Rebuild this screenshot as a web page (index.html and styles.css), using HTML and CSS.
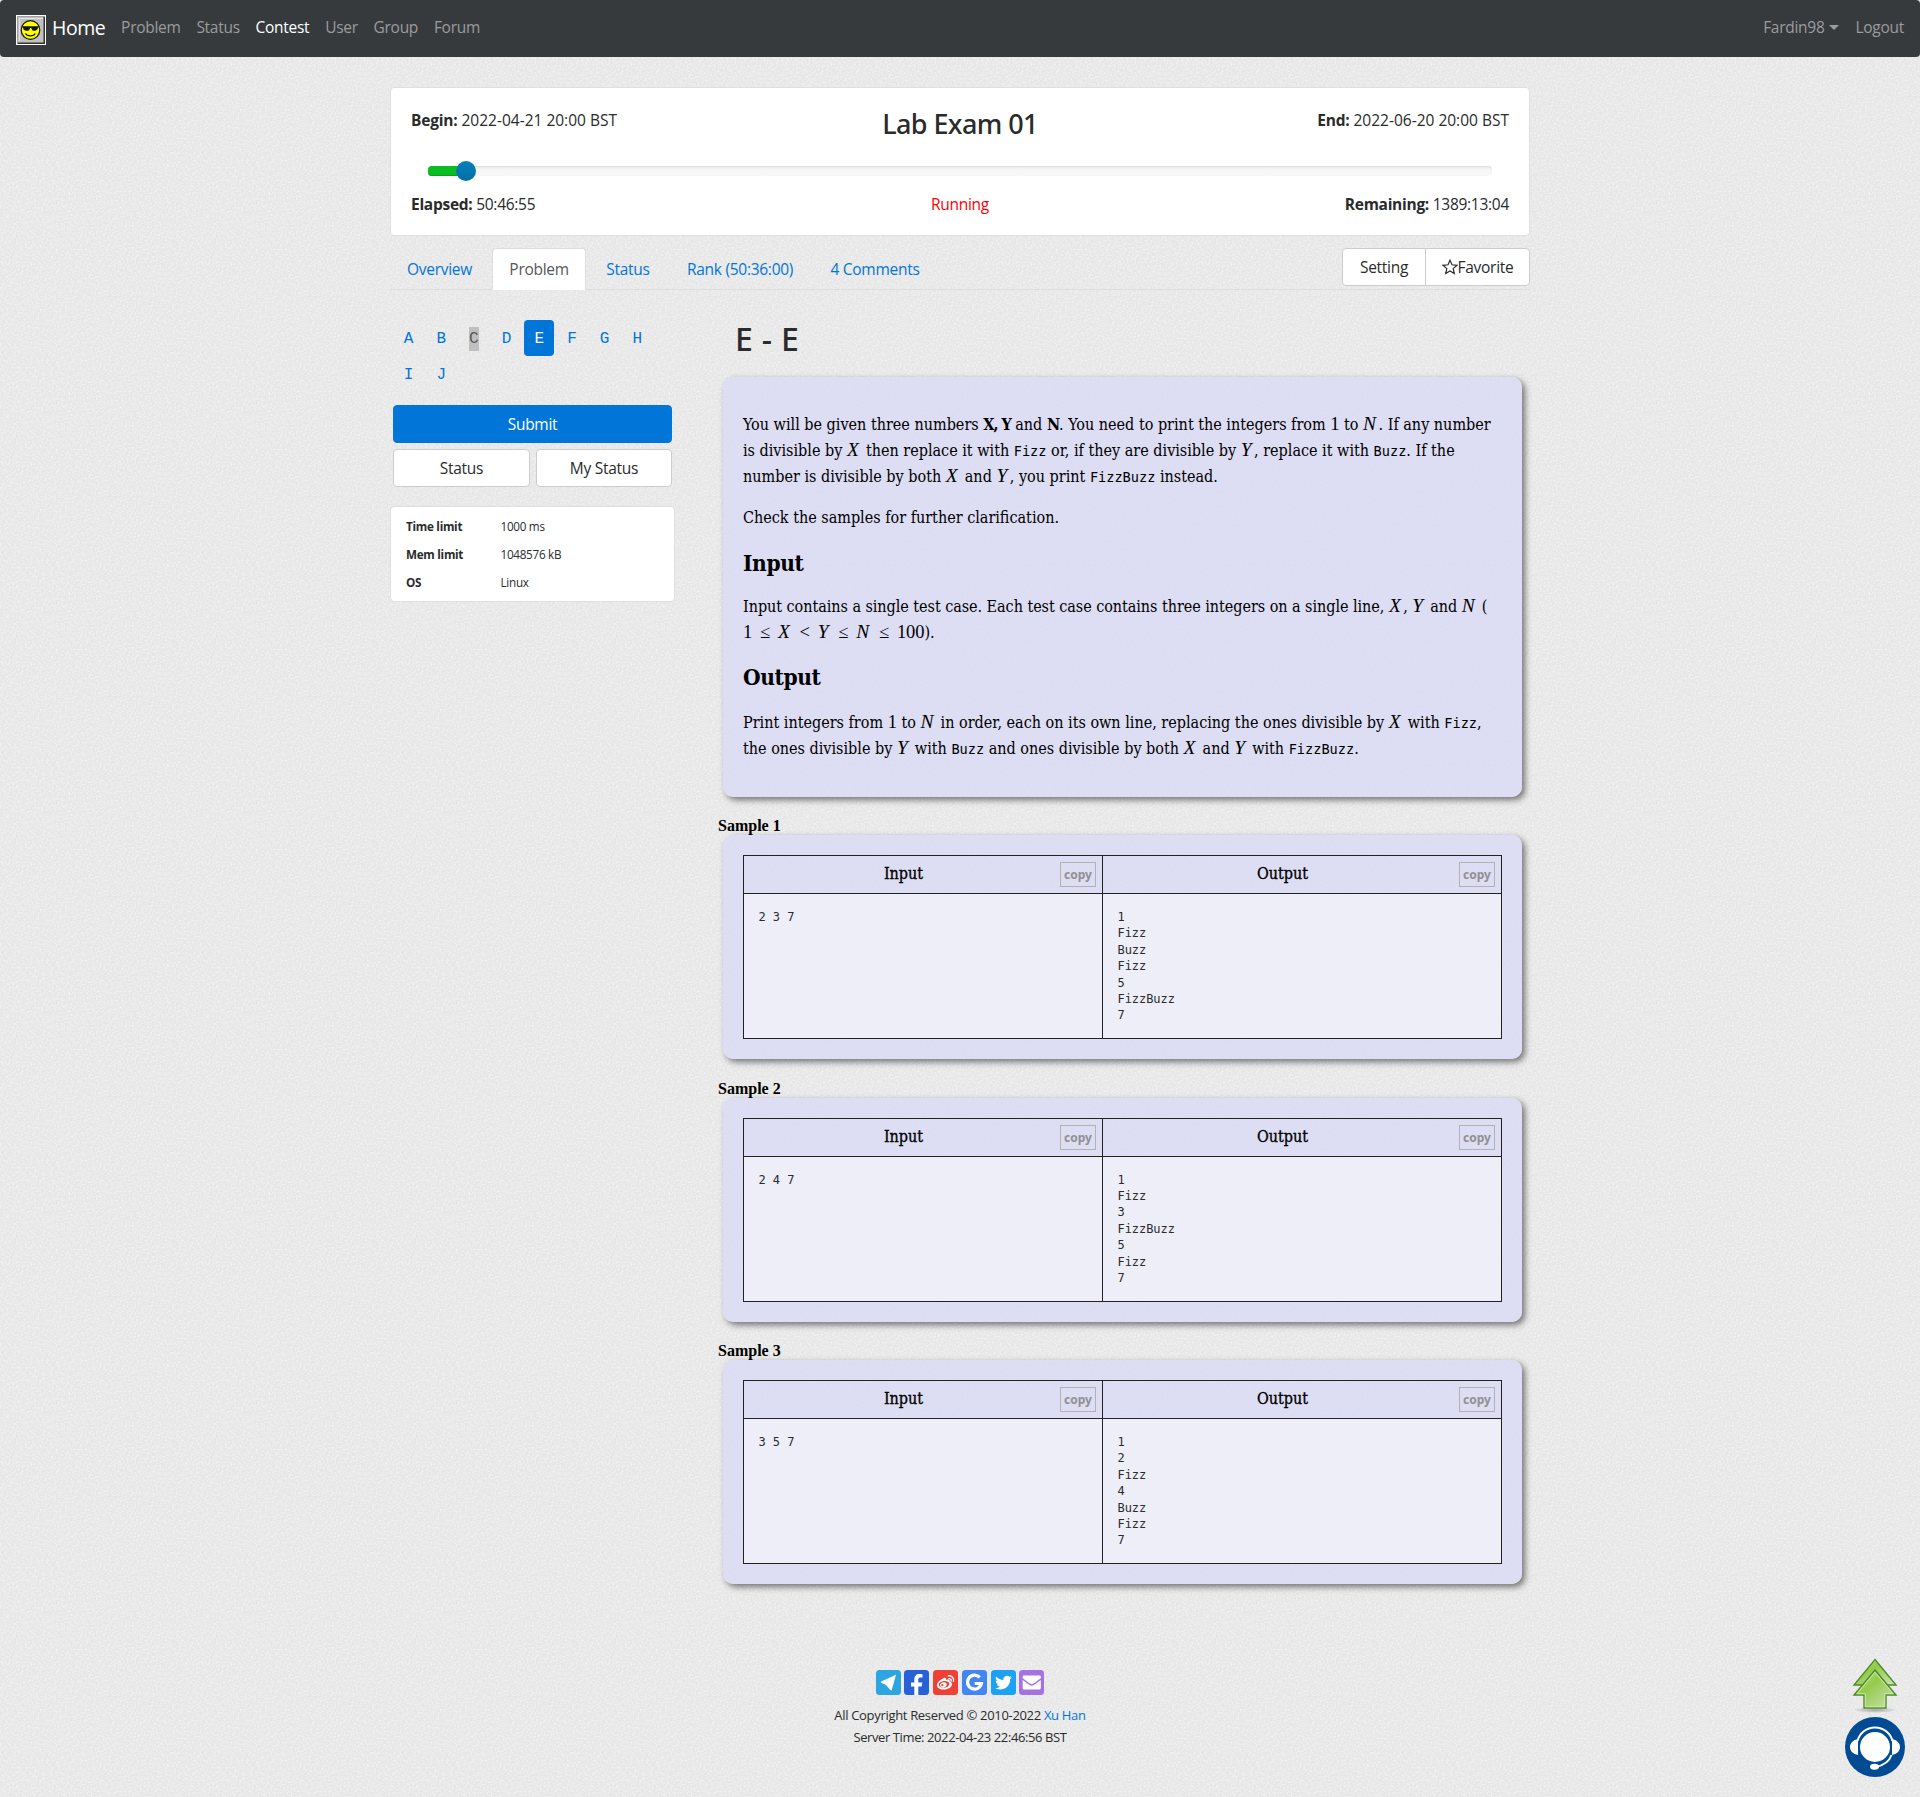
FILE: index.html
```html
<!DOCTYPE html>
<html lang="en">
<head>
<meta charset="utf-8">
<title>Lab Exam 01 - Problem E</title>
<link rel="stylesheet" href="styles.css">
</head>
<body>
<nav class="navbar">
  <a class="brand">
    <svg class="brand-icon" width="30" height="30" viewBox="0 0 30 30">
      <path fill="#fff" d="M0 0h30v30H0z"/><path fill="#c0c0c0" d="M1 1h28v28H1z"/>
      <path fill="#a0a0a0" d="M1 1h28v1H2v27H1z"/><path fill="#e4e4e4" d="M3 3h24v1H4v22H3z"/>
      <path fill="#333" d="M27.500 2v25.500H2V29h27V2z"/>
      <circle cx="14.500" cy="15" r="9.300" fill="#ff0" stroke="#111" stroke-width="1.200"/>
      <path fill="#111" d="M6 11.200h17v1.400h-1c-.4 2.200-1.600 3.200-3.400 3.200s-2.900-1-3.300-2.900h-1.200C13.700 14.800 12.400 15.800 10.600 15.800c-2 0-3.300-.9-3.700-3.200H6z"/>
      <path fill="none" stroke="#111" stroke-width="1.200" d="M9.500 18.500c1.600 3.200 8.200 3.200 9.800 0"/>
    </svg>
    <span>Home</span>
  </a>
  <a>Problem</a><a>Status</a><a class="current">Contest</a><a>User</a><a>Group</a><a>Forum</a>
  <span class="nav-right"><a>Fardin98<i class="caret"></i></a><a>Logout</a></span>
</nav>

<main class="container">
  <section class="card contest">
    <div class="contest-row">
      <span class="date"><b>Begin:</b> 2022-04-21 20:00 BST</span>
      <h3>Lab Exam 01</h3>
      <span class="date end"><b>End:</b> 2022-06-20 20:00 BST</span>
    </div>
    <div class="track"><div class="fill"></div><div class="knob"></div></div>
    <div class="contest-row">
      <span><b>Elapsed:</b> 50:46:55</span>
      <span class="running">Running</span>
      <span class="end"><b>Remaining:</b> 1389:13:04</span>
    </div>
  </section>

  <div class="tabs">
    <a>Overview</a><a class="active">Problem</a><a>Status</a><a>Rank (50:36:00)</a><a>4 Comments</a>
    <div class="group">
      <button>Setting</button><button><svg class="star" width="16" height="16" viewBox="0 0 16 16"><path d="M8 1.200l2 4.600 5 .5-3.800 3.300 1.100 4.900L8 11.900l-4.300 2.600 1.100-4.900L1 6.300l5-.5z" fill="none" stroke="#292b2c" stroke-width="1.200"/></svg>Favorite</button>
    </div>
  </div>

  <div class="columns">
    <aside>
      <div class="letters">
        <a>A</a><a>B</a><a><span class="picked">C</span></a><a>D</a><a class="on">E</a><a>F</a><a>G</a><a>H</a><a>I</a><a>J</a>
      </div>
      <div class="actions">
        <button class="primary">Submit</button><button>Status</button><button>My Status</button>
      </div>
      <dl class="card limits">
        <dt>Time limit</dt><dd>1000 ms</dd>
        <dt>Mem limit</dt><dd>1048576 kB</dd>
        <dt>OS</dt><dd>Linux</dd>
      </dl>
    </aside>

    <article>
      <h2>E - E</h2>
      <section class="panel statement">
        <p>You will be given three numbers <b>X, Y</b> and <b>N</b>. You need to print the integers from <var class="num">1</var> to <var>N</var>. If any number<br>
          is divisible by <var>X</var> then replace it with <code>Fizz</code> or, if they are divisible by <var>Y</var>, replace it with <code>Buzz</code>. If the<br>
          number is divisible by both <var>X</var> and <var>Y</var>, you print <code>FizzBuzz</code> instead.</p>
        <p>Check the samples for further clarification.</p>
        <h4>Input</h4>
        <p class="tight">Input contains a single test case. Each test case contains three integers on a single line, <var>X</var>, <var>Y</var> and <var>N</var> (<br>
          <span class="formula">1 ≤ <i>X</i> &lt; <i>Y</i> ≤ <i>N</i> ≤ 100</span>).</p>
        <h4>Output</h4>
        <p>Print integers from <var class="num">1</var> to <var>N</var> in order, each on its own line, replacing the ones divisible by <var>X</var> with <code>Fizz</code>,<br>
          the ones divisible by <var>Y</var> with <code>Buzz</code> and ones divisible by both <var>X</var> and <var>Y</var> with <code>FizzBuzz</code>.</p>
      </section>

      <div class="sample">
        <h5>Sample 1</h5>
        <div class="panel io">
          <div class="io-head">Input<button class="copy">copy</button></div>
          <div class="io-head">Output<button class="copy">copy</button></div>
          <pre>2 3 7</pre>
          <pre>1
Fizz
Buzz
Fizz
5
FizzBuzz
7</pre>
        </div>
      </div>
      <div class="sample">
        <h5>Sample 2</h5>
        <div class="panel io">
          <div class="io-head">Input<button class="copy">copy</button></div>
          <div class="io-head">Output<button class="copy">copy</button></div>
          <pre>2 4 7</pre>
          <pre>1
Fizz
3
FizzBuzz
5
Fizz
7</pre>
        </div>
      </div>
      <div class="sample">
        <h5>Sample 3</h5>
        <div class="panel io">
          <div class="io-head">Input<button class="copy">copy</button></div>
          <div class="io-head">Output<button class="copy">copy</button></div>
          <pre>3 5 7</pre>
          <pre>1
2
Fizz
4
Buzz
Fizz
7</pre>
        </div>
      </div>
    </article>
  </div>
</main>

<footer>
  <div class="social">
    <svg viewBox="0 0 25 25"><rect width="25" height="25" rx="3.500" fill="#2ca5e0"/><path fill="#fff" d="M20 4.800L5.200 11.600c-.6.400-.4.900.2 1.200l4.200 2 4.800 5.300c.6.600 1.200.4 1.400-.3z"/></svg>
    <svg viewBox="0 0 25 25"><rect width="25" height="25" rx="3.500" fill="#2860d8"/><path fill="#fff" d="M10.300 25v-8.600H7V12.500h3.300V9.700c0-3.700 2-5.700 5.200-5.700 1.200 0 2.300.1 3 .2v3.400h-2c-1.700 0-2.200.9-2.200 2.100v2.800h4l-.6 3.900h-3.400V25z"/></svg>
    <svg viewBox="0 0 25 25"><rect width="25" height="25" rx="3.500" fill="#ef4035"/><path fill="#fff" fill-rule="evenodd" d="M10.500 8.200c1.700-.9 2.900-.2 2.500 1.700 2-.8 4-.7 3.700 1.500 1.800.6 2.800 1.700 2.300 3.400-.9 3.300-5 5-8.700 4.800-3.600-.2-6.500-2-6.400-4.700.1-2.500 3.900-5.600 6.600-6.700zM11 11c-3.300.3-5.400 2.100-5.200 3.900s2.400 3 5.400 2.800 5.300-2.100 5.100-4-2.400-3-5.300-2.700zM9.800 12.400c2-.5 4 .4 4 2.200 0 1.700-2 3.100-4 2.900-1.900-.2-3-1.400-2.700-2.900.3-1.200 1.400-2 2.700-2.200zM9.400 14a1.100 1.100 0 1 0 .1 2.200 1.100 1.100 0 0 0-.1-2.200z"/><path fill="none" stroke="#fff" stroke-width="1.400" stroke-linecap="round" d="M15.400 5.800c3.400-.5 6 2.300 5 5.600M15.900 8.600c1.600-.1 2.600 1 2.200 2.400"/></svg>
    <svg viewBox="0 0 25 25"><rect width="25" height="25" rx="3.500" fill="#4285f4"/><path fill="none" stroke="#fff" stroke-width="3.200" d="M17.700 7.400a7 7 0 1 0 1.700 6.100h-6.700"/></svg>
    <svg viewBox="0 0 25 25"><rect width="25" height="25" rx="3.500" fill="#1da1f2"/><path fill="#fff" d="M21 7.300c-.6.300-1.300.5-2 .6.700-.4 1.200-1.100 1.500-1.900-.7.400-1.400.7-2.200.8a3.500 3.500 0 0 0-5.900 3.200C9.500 9.900 7 8.500 5.200 6.400c-1 1.700-.4 3.700 1.100 4.700-.6 0-1.100-.2-1.600-.4 0 1.700 1.200 3.100 2.800 3.500-.5.100-1 .1-1.600 0 .4 1.400 1.700 2.400 3.200 2.400A7 7 0 0 1 4 18.100c5.900 3.600 15.300.5 15.200-9 .7-.5 1.300-1.100 1.800-1.800z"/></svg>
    <svg viewBox="0 0 25 25"><rect width="25" height="25" rx="3.500" fill="#a572e6"/><path fill="#fff" d="M5 5.500h15.500c.8 0 1.300.5 1.300 1.200v1.500c-2.800 2.200-5.500 4.300-7.400 5.400-1.200.7-2 .7-3.200 0C9.300 12.500 6.500 10.400 3.700 8.200V6.700c0-.7.500-1.200 1.300-1.200zM3.700 10c3 2.300 5.200 4 6.800 5 1.600 1 2.900 1 4.500 0 1.600-1 3.800-2.700 6.800-5v8c0 .9-.6 1.500-1.400 1.500H5.100c-.8 0-1.400-.6-1.400-1.500z"/></svg>
  </div>
  <p>All Copyright Reserved © 2010-2022 <a>Xu Han</a></p>
  <p class="clock">Server Time: 2022-04-23 22:46:56 BST</p>
</footer>

<div class="floating">
  <svg width="46" height="56" viewBox="0 0 46 56">
    <defs>
      <linearGradient id="leaf" x1="0" y1="0" x2="1" y2="1"><stop offset="0" stop-color="#c4e0a0"/><stop offset=".4" stop-color="#93cb48"/><stop offset=".6" stop-color="#a8d272"/><stop offset="1" stop-color="#cbe5b0"/></linearGradient>
      <radialGradient id="shade"><stop offset="0" stop-color="#000" stop-opacity=".3"/><stop offset="1" stop-color="#000" stop-opacity="0"/></radialGradient>
    </defs>
    <ellipse cx="23" cy="52" rx="22" ry="3" fill="url(#shade)"/>
    <path d="M23 1.500L44 27H2z" fill="url(#leaf)" stroke="#4e8a2c" stroke-width="1.400"/>
    <path d="M23 12L44 37H34v13H12V37H2z" fill="url(#leaf)" stroke="#4e8a2c" stroke-width="1.400"/>
    <path d="M23 14.200L41 35.700h-8.300v13H13.300v-13H5z" fill="none" stroke="#cbe8a6" stroke-width="1"/>
  </svg>
  <svg width="60" height="60" viewBox="0 0 60 60">
    <circle cx="30" cy="30" r="30" fill="#004b93"/>
    <circle cx="30" cy="30" r="15" fill="#fff"/>
    <path fill="#fff" d="M13 22v16C8 37 5 34 5 30s3-7 8-8zM47 22v16c5-1 8-4 8-8s-3-7-8-8z"/>
    <path fill="none" stroke="#fff" stroke-width="2" d="M12.500 24c2-8 9-13.500 17.500-13.500S45.500 16 47.500 24M46.500 38c-2 6-8 10.500-16 12"/>
    <ellipse cx="29.500" cy="49.700" rx="4.500" ry="3" fill="#fff"/>
  </svg>
</div>
</body>
</html>
```
FILE: styles.css
```css
* { box-sizing: border-box; }
body {
  margin: 0;
  height: 1797px;
  overflow: hidden;
  display: flex;
  flex-direction: column;
  color: #292b2c;
  background: #e6e6e6 url("data:image/svg+xml,%3Csvg xmlns='http://www.w3.org/2000/svg' width='200' height='200'%3E%3Cfilter id='n' x='0' y='0' width='100%25' height='100%25'%3E%3CfeTurbulence type='fractalNoise' baseFrequency='.55' numOctaves='3' stitchTiles='stitch'/%3E%3CfeColorMatrix values='0 0 0 0 1 0 0 0 0 1 0 0 0 0 1 1.1 0 0 0 -.42'/%3E%3C/filter%3E%3Crect width='200' height='200' filter='url(%23n)'/%3E%3C/svg%3E");
  font: 15.5px/24px "Open Sans", "Noto Sans", sans-serif;
  letter-spacing: -.28px;
}
h2, h3, h4, h5, p, dl, dd, pre { margin: 0; }
b { font-weight: 700; }
button {
  font: inherit;
  letter-spacing: inherit;
  color: #292b2c;
  background: #fff;
  border: 1px solid #ccc;
  border-radius: 4px;
  padding: 0;
}

.navbar {
  height: 57px;
  padding: 0 16px 3px;
  display: flex;
  align-items: center;
  gap: 15.8px;
  background: #373a3c;
  border-radius: 4px;
  color: #9b9c9e;
}
.brand { display: flex; align-items: center; gap: 6px; color: #fff; font-size: 19.5px; letter-spacing: -.45px; }
.brand span { margin-top: 2px; }
.brand-icon { margin-top: 5px; }
.current { color: #fff; }
.nav-right { display: flex; gap: 16px; margin-left: auto; }
.caret { display: inline-block; margin-left: 5px; border: 5px solid transparent; border-top-color: currentColor; border-bottom: 0; vertical-align: 3px; }

.container { width: 1140px; margin: 30px auto 0; }
.card { background: #fff; border: 1px solid #dfdfdf; border-radius: 4px; }
.contest { height: 149px; padding: 20px; }
.contest-row { display: grid; grid-template-columns: 1fr 1fr 1fr; }
.contest-row > * { height: 33px; }
.contest .date { letter-spacing: 0; }
.date b { letter-spacing: -.2px; }
.contest h3 { font: 500 27px/31px "Noto Sans", sans-serif; letter-spacing: -.6px; text-align: center; }
.end { text-align: right; }
.running { text-align: center; color: #f00; }
.track { position: relative; height: 10px; margin: 25px 17px 16px; border-radius: 4px; background: linear-gradient(#ececec, #f7f7f7 40%); box-shadow: inset 0 1px 1px #ddd; }
.fill { width: 3.520%; height: 10px; border-radius: 4px; background: #0bbd23; box-shadow: inset 0 -1px #0a9f1e; }
.knob { position: absolute; left: 28px; top: -5px; width: 20px; height: 20px; border-radius: 50%; background: linear-gradient(#0480be, #036fa5); }

.tabs { display: flex; height: 42px; margin-top: 12px; border-bottom: 1px solid #ddd; }
.tabs a { padding: 8px 16px; height: 42px; color: #0275d8; border: 1px solid transparent; margin-right: 3.400px; line-height: 25px; }
.tabs .active { color: #55595c; background: #fff; border-color: #ddd #ddd #fff; border-radius: 4px 4px 0 0; }
.group { margin-left: auto; display: flex; height: 38px; }
.group button { width: 84px; border-radius: 4px 0 0 4px; }
.group button + button { width: 105px; margin-left: -1px; border-radius: 0 4px 4px 0; }
.star { vertical-align: -2px; }

.columns { display: flex; gap: 38px; margin-top: 30px; }
aside { width: 285px; }
.letters { display: grid; grid-template-columns: repeat(8, 29.700px); gap: 0 3px; padding-left: 3.700px; font: 16px/38px "Liberation Mono", monospace; letter-spacing: 0; text-align: center; }
.letters a { color: #0275d8; height: 36px; border-radius: 4px; }
.letters .on { background: #0275d8; color: #fff; }
.picked { background: #bfbfbf; color: #55595c; padding: 3px 0; }
.actions { display: grid; grid-template-columns: 137px 136px; gap: 6px; margin: 13px 3px 19px; line-height: 36px; }
.actions button { height: 38px; }
.actions .primary { grid-column: 1 / 3; background: #0275d8; border-color: #0275d8; color: #fff; }
.limits { height: 95.500px; padding: 5px 15px; display: grid; grid-template-columns: 94.500px 1fr; font-size: 11.700px; line-height: 28px; }
.limits dt { font-weight: 700; }

article { flex: 1; padding-right: 8px; }
article h2 { font: 500 32px/36px "Noto Sans", sans-serif; margin: 1px 0 20px 22px; letter-spacing: .3px; }
.panel { margin-left: 10px; padding: 20px; border-radius: 10px; background: rgba(217, 217, 245, .8); box-shadow: 3px 3px 6px rgba(0, 0, 0, .5); }
.statement { height: 420px; padding-top: 35px; color: #000; font: 16px/26px "DejaVu Serif Condensed", "DejaVu Serif", serif; letter-spacing: 0; white-space: nowrap; }
.statement p { margin-bottom: 15px; }
.statement .tight { letter-spacing: -.040px; }
.statement h4 { font: 700 22.500px/29px "DejaVu Serif Condensed", "DejaVu Serif", serif; letter-spacing: -.4px; margin: 17.500px 0 16px; }
.statement h4:nth-of-type(2) { margin-bottom: 17.500px; }
.statement code { font: 13.600px/20px "DejaVu Sans Mono", monospace; }
.statement b { letter-spacing: -1px; }
.statement var, .formula { font: italic 18.500px/20px "Liberation Serif", serif; }
.statement var { font-size: 19.500px; padding-right: 2.500px; }
.statement .num, .formula { font-style: normal; padding-right: 0; }
.statement .num { font-size: 18.500px; }
.formula { word-spacing: 3.200px; }
.formula i { font-size: 19.500px; padding-right: 2px; }

.sample { height: 262.500px; padding-top: 19px; margin-left: 5px; }
.sample h5 { font: 700 16px/19px "Liberation Serif", serif; letter-spacing: 0; color: #000; }
.sample .panel { margin-left: 5px; display: grid; grid-template-columns: 360px 399px; grid-template-rows: 39px 145px; height: 224px; }
.io-head { position: relative; padding-right: 39px; border: 1px solid #222; text-align: center; color: #000; font: 16px/35px "DejaVu Serif Condensed", "DejaVu Serif", serif; -webkit-text-stroke: .3px #000; letter-spacing: 0; }
.io-head:nth-child(2), .io pre:nth-child(4) { margin-left: -1px; }
.io pre { border: 1px solid #222; border-top: 0; background: rgba(255, 255, 255, .5); padding: 15px 14.500px; font: 12px/16.400px "DejaVu Sans Mono", monospace; letter-spacing: -.050px; }
.copy { position: absolute; right: 6px; top: 6px; width: 36px; height: 25px; font: 700 12px/23px "Noto Sans", sans-serif; color: #909090; background: none; border: 1px solid #b2b2b2; border-radius: 0; -webkit-text-stroke: 0; }

footer { margin-top: 85px; text-align: center; font-size: 13px; line-height: 22px; letter-spacing: -.320px; }
.clock { letter-spacing: -.4px; }
.social { display: flex; justify-content: center; gap: 3.700px; height: 34px; }
.social svg { width: 25px; height: 25px; }
a { text-decoration: none; }
footer a { color: #0275d8; }

.floating { position: fixed; right: 15px; bottom: 20px; width: 60px; display: flex; flex-direction: column; align-items: center; gap: 3px; }
```
